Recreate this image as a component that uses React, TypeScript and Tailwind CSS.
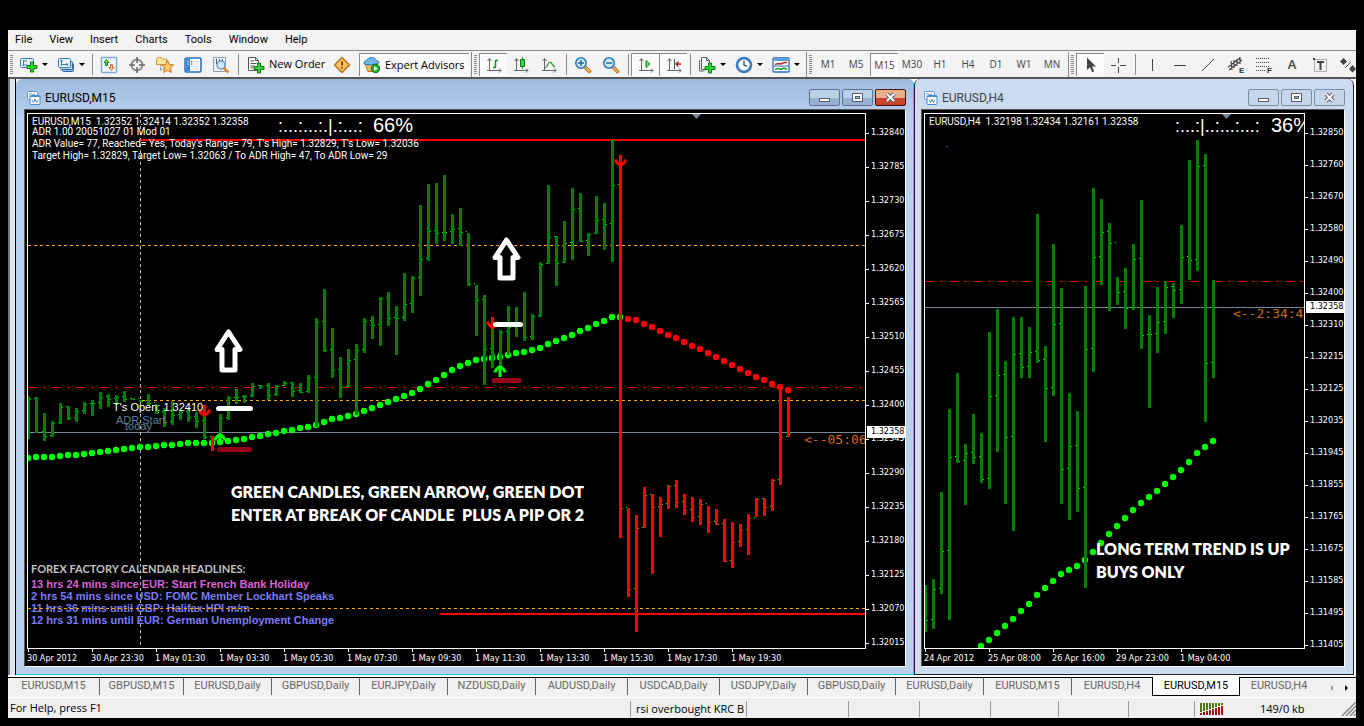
import React from 'react';
import clsx from 'clsx';

type Bar = [high: number, low: number, close: number];

const BAR_STEP = 8;

// M15 window: high / low / close, in canvas pixels
const M15_BARS: Bar[] = [
  [396, 439, 399], [397, 433, 432], [413, 441, 436], [421, 437, 423], [403, 424, 407], [406, 420, 418],
  [408, 422, 411], [402, 414, 404], [400, 416, 403], [392, 409, 397], [394, 407, 399], [395, 405, 397],
  [391, 402, 399], [398, 400, 399], [400, 402, 401], [394, 405, 403], [404, 414, 412], [408, 427, 422],
  [401, 425, 415], [410, 420, 412], [408, 422, 417], [412, 428, 421], [414, 439, 437], [436, 451, 438],
  [414, 440, 418], [396, 420, 398], [389, 404, 397], [395, 403, 396], [383, 397, 386], [385, 389, 386],
  [383, 400, 395], [385, 396, 386], [381, 386, 383], [382, 397, 391], [383, 393, 392], [375, 393, 378],
  [318, 427, 322], [289, 352, 350], [328, 378, 370], [357, 398, 387], [349, 387, 360], [344, 415, 350],
  [318, 353, 321], [316, 339, 325], [297, 346, 298], [292, 326, 318], [306, 355, 318], [273, 321, 304],
  [276, 313, 278], [205, 296, 259], [184, 261, 231], [183, 244, 233], [175, 241, 232], [214, 244, 229],
  [208, 246, 232], [233, 286, 284], [285, 336, 300], [295, 385, 349], [327, 368, 354], [330, 368, 332],
  [306, 355, 327], [307, 337, 325], [292, 341, 337], [314, 340, 316], [262, 317, 264], [185, 264, 237],
  [236, 286, 263], [221, 263, 243], [188, 260, 209], [193, 242, 241], [233, 256, 234], [196, 234, 220],
  [203, 250, 224], [140, 262, 185], [163, 538, 508], [508, 597, 589], [515, 632, 528], [487, 528, 495],
  [494, 574, 507], [497, 537, 504], [485, 509, 486], [480, 508, 502], [494, 515, 510], [497, 522, 517],
  [499, 525, 504], [506, 533, 522], [509, 525, 524], [519, 562, 561], [522, 568, 542], [524, 547, 530],
  [514, 555, 518], [498, 517, 499], [498, 516, 507], [479, 511, 480], [388, 485, 437], [397, 437, 433],
];

const M15_DOTS = [
  458, 457, 457, 457, 456, 455, 455, 454, 453, 452, 451, 450, 449, 448, 447, 447, 446, 445, 445, 444, 443, 443,
  443, 443, 442, 441, 440, 439, 437, 436, 434, 433, 431, 430, 428, 427, 425, 422, 419, 418, 416, 414, 411, 408,
  405, 402, 399, 396, 393, 389, 384, 380, 375, 370, 366, 363, 360, 359, 358, 357, 355, 353, 352, 350, 348, 344,
  341, 338, 335, 331, 328, 324, 321, 317, 317, 319, 320, 324, 327, 331, 335, 338, 342, 346, 349, 353, 357, 361,
  365, 369, 373, 377, 380, 384, 387, 390,
];

const H4_BARS: Bar[] = [
  [585, 632, 620], [579, 629, 589], [492, 594, 551], [409, 620, 457], [373, 463, 461], [444, 505, 453],
  [414, 464, 457], [433, 483, 479], [332, 489, 396], [309, 452, 375], [361, 504, 437], [317, 531, 354],
  [317, 378, 367], [327, 378, 352], [214, 363, 360], [346, 442, 388], [244, 396, 324], [288, 504, 469],
  [393, 520, 446], [411, 512, 488], [286, 588, 349], [188, 372, 257], [199, 285, 232], [223, 311, 243],
  [277, 305, 292], [268, 329, 308], [244, 310, 259], [200, 349, 335], [315, 408, 334], [287, 353, 322],
  [281, 334, 287], [283, 318, 290], [225, 304, 257], [160, 280, 260], [140, 271, 166], [154, 422, 363],
  [280, 378, 307],
];

const H4_DOTS = [
  646, 640, 633, 626, 619, 611, 604, 595, 588, 581, 574, 570, 566, 560, 552, 543, 534, 526, 518, 510, 503, 497,
  491, 484, 477, 470, 462, 453, 447, 441,
];

const M15_PRICES = [
  '1.32840', '1.32785', '1.32730', '1.32675', '1.32620', '1.32565', '1.32510', '1.32455', '1.32400', '1.32345',
  '1.32290', '1.32235', '1.32180', '1.32125', '1.32070', '1.32015',
];
const H4_PRICES = [
  '1.32850', '1.32760', '1.32670', '1.32580', '1.32490', '1.32400', '1.32310', '1.32215', '1.32125', '1.32035',
  '1.31945', '1.31855', '1.31765', '1.31675', '1.31585', '1.31495', '1.31405',
];
const M15_TIMES = [
  '30 Apr 2012', '30 Apr 23:30', '1 May 01:30', '1 May 03:30', '1 May 05:30', '1 May 07:30', '1 May 09:30',
  '1 May 11:30', '1 May 13:30', '1 May 15:30', '1 May 17:30', '1 May 19:30',
];
const H4_TIMES = ['24 Apr 2012', '25 Apr 08:00', '26 Apr 16:00', '29 Apr 23:00', '1 May 04:00'];

const MENU = ['File', 'View', 'Insert', 'Charts', 'Tools', 'Window', 'Help'];
const PERIODS = ['M1', 'M5', 'M15', 'M30', 'H1', 'H4', 'D1', 'W1', 'MN'];

const TABS: [string, string][] = [
  ['EURUSD,M15', 'w-[92px]'], ['GBPUSD,M15', 'w-[84px]'], ['EURUSD,Daily', 'w-[88px]'],
  ['GBPUSD,Daily', 'w-[88px]'], ['EURJPY,Daily', 'w-[88px]'], ['NZDUSD,Daily', 'w-[88px]'],
  ['AUDUSD,Daily', 'w-[92px]'], ['USDCAD,Daily', 'w-[92px]'], ['USDJPY,Daily', 'w-[88px]'],
  ['GBPUSD,Daily', 'w-[88px]'], ['EURUSD,Daily', 'w-[88px]'], ['EURUSD,M15', 'w-[88px]'],
  ['EURUSD,H4', 'w-[80px]'], ['EURUSD,M15', 'w-[88px]'], ['EURUSD,H4', 'w-[78px]'],
];
const ACTIVE_TAB = 13;

/* ---------- toolbar icons ---------- */

const Icon = ({ children }: { children: React.ReactNode }) => (
  <svg className="size-[18px] shrink-0" viewBox="0 0 18 18" fill="none">{children}</svg>
);

const Plus = ({ x, y }: { x: number; y: number }) => (
  <path
    transform={`translate(${x} ${y})`}
    d="M4 .5h3V4h3.500v3H7v3.500H4V7H.5V4H4z"
    fill="#2fd42f"
    stroke="#0a7d12"
  />
);

const Axes = () => (
  <path d="M4.500 3v12M2.500 5l2-2.500 2 2.500M2 14.500h14M14 12.500l2 2-2 2" stroke="#666" />
);

const NewChartIcon = () => (
  <Icon>
    <rect x=".5" y="2.500" width="13" height="9" rx="1" fill="#e6f2fb" stroke="#3c78b4" />
    <path d="M3.500 4v6M2.500 9h5M3 5h4" stroke="#3c78b4" />
    <Plus x={6.5} y={5.5} />
  </Icon>
);
const ProfilesIcon = () => (
  <Icon>
    <rect x="5.500" y="7.500" width="11" height="8" rx="1" fill="#8fbce6" stroke="#2f6aa8" />
    <rect x="3.500" y="5.500" width="12" height="8" rx="1" fill="#b7d6f1" stroke="#2f6aa8" />
    <rect x="1.500" y="2.500" width="12" height="9" rx="1" fill="#eaf4fc" stroke="#3c78b4" />
    <path d="M4.500 4v6M3 5h3M4 8.500h7M10 7v3" stroke="#3c78b4" />
  </Icon>
);
const MarketIcon = () => (
  <Icon>
    <rect x="1.500" y="1.500" width="15" height="15" rx="1" fill="#f4faff" stroke="#7fabd6" strokeWidth="1.500" />
    <path d="M6.500 3.500 4 6.500h1.500v3h2v-3H9z" fill="#5fe05f" stroke="#128a1c" />
    <path d="M11.500 14.500l2.500-3h-1.500v-3h-2v3H9z" fill="#ffd08a" stroke="#d0661a" />
  </Icon>
);
const TargetIcon = () => (
  <Icon>
    <circle cx="9" cy="9" r="5.500" stroke="#777" strokeWidth="1.500" />
    <path d="M9 1v6M9 11v6M1 9h6M11 9h6" stroke="#666" strokeWidth="1.500" />
  </Icon>
);
const NavigatorIcon = () => (
  <Icon>
    <path d="M.5 8.500v-6l1-1h4l1 1.500h4v5.500z" fill="#fbe39a" stroke="#c99a35" />
    <path d="M4.500 9.500v6M5 13h3" stroke="#666" strokeDasharray="1 1" />
    <path d="M11.500 4.500l1.900 4 4.100.5-3 2.900.8 4.600-3.800-2.200-3.800 2.200.8-4.600-3-2.900 4.100-.5z" fill="#ffc765" stroke="#c9761a" />
  </Icon>
);
const TerminalIcon = () => (
  <Icon>
    <rect x="1" y="2" width="16" height="14" rx="1.500" fill="#fff" stroke="#2a6cb4" strokeWidth="1.500" />
    <path d="M2 3h4v12H2z" fill="#3b86d2" />
    <path d="M4 5.500v.01M4 8v.01" stroke="#fff" strokeWidth="1.500" strokeLinecap="round" />
    <path d="M7 5.500h8M7 8h8M7 10.500h8M7 13h8" stroke="#c6dbef" />
    <path d="M7.500 5.500v.01M7.500 8v.01" stroke="#d22" strokeWidth="1.500" strokeLinecap="round" />
  </Icon>
);
const TesterIcon = () => (
  <Icon>
    <path d="M1.500 1.500h12v14h-12z" fill="#eef3f8" stroke="#8b9aab" />
    <path d="M4.500 3v5M7.500 3v3M10.500 3v4" stroke="#555" />
    <circle cx="9" cy="9" r="4" fill="#cfe9fa" stroke="#6a9cc4" strokeWidth="1.500" />
    <path d="M12 12l4.500 4.500" stroke="#d38a2b" strokeWidth="2.500" />
  </Icon>
);
const OrderIcon = () => (
  <Icon>
    <path d="M1.500 1.500h7l3 3v10h-10z" fill="#fff" stroke="#555" />
    <path d="M8.500 1.500v3h3M3.500 5h4M3.500 7.500h6M3.500 10h4M3.500 12h3" stroke="#555" />
    <Plus x={6.5} y={6.5} />
  </Icon>
);
const AlertIcon = () => (
  <Icon>
    <path d="M9 1.500 16.500 9 9 16.500 1.500 9z" fill="#f9c25e" stroke="#b9711c" strokeWidth="1.500" strokeLinejoin="round" />
    <path d="M9 5.500v4M9 11v1.500" stroke="#7a3c0a" strokeWidth="1.800" />
  </Icon>
);
const ExpertIcon = () => (
  <Icon>
    <path d="M2 7.500l3 8h7l3-8z" fill="#f3b760" stroke="#b9761f" />
    <path d="M1 7.500C.5 5 3 5.500 4 4c1.500-3 7-3.500 8.500-.5.5 1.500 4 1.500 3.500 3-1 2-13 3.500-15 1z" fill="#6fb7e4" stroke="#2a76ac" />
    <circle cx="12.500" cy="12.500" r="4.200" fill="#25b336" stroke="#0c6d18" />
    <path d="M11 10.200v4.600l3.800-2.300z" fill="#fff" />
  </Icon>
);
const BarChartIcon = () => (
  <Icon><Axes /><path d="M10.500 4v8M10.500 4.500h2.500M8 11.500h2.500" stroke="#128a1c" strokeWidth="1.500" /></Icon>
);
const CandleIcon = () => (
  <Icon><Axes /><path d="M10.500 1v12" stroke="#128a1c" /><path d="M8.500 3.500h4v7h-4z" fill="#3bd14a" stroke="#0a7d12" /></Icon>
);
const LineChartIcon = () => (
  <Icon><Axes /><path d="M5 12c3-1 3-6 5-6s2 4 5 5" stroke="#1b7d2a" strokeWidth="1.200" /></Icon>
);
const ZoomIcon = ({ plus }: { plus?: boolean }) => (
  <Icon>
    <path d="M11 11l5.500 5.500" stroke="#a96412" strokeWidth="3.500" />
    <path d="M11 11l5 5" stroke="#f2b64c" strokeWidth="1.800" />
    <circle cx="7" cy="7" r="5.200" fill="#cdeafa" stroke="#2a7bbd" strokeWidth="1.600" />
    <path d={plus ? 'M4 7h6M7 4v6' : 'M4 7h6'} stroke="#1f6aa5" strokeWidth="1.500" />
  </Icon>
);
const AutoScrollIcon = () => (
  <Icon><Axes /><path d="M9 4.500v7l4-3.500z" fill="#6fdc78" stroke="#128a1c" /></Icon>
);
const ShiftIcon = () => (
  <Icon><Axes /><path d="M9.500 3v10" stroke="#355" /><path d="M16 8h-5M13.500 5.500 11 8l2.500 2.500" stroke="#b02010" strokeWidth="1.400" /></Icon>
);
const IndicatorIcon = () => (
  <Icon>
    <path d="M3.500 1.500h5l3 3v9h-8z" fill="#fff" stroke="#555" />
    <path d="M8.500 1.500v3h3M1.500 4v11h5" stroke="#666" />
    <Plus x={6.5} y={6.5} />
  </Icon>
);
const ClockIcon = () => (
  <Icon>
    <circle cx="9" cy="9" r="7" fill="#f4faff" stroke="#1e62ac" strokeWidth="2.500" />
    <circle cx="9" cy="9" r="7.200" stroke="#5fa4e4" strokeWidth=".8" />
    <path d="M9 4.500V9l3 1.500" stroke="#444" strokeWidth="1.300" />
  </Icon>
);
const TemplateIcon = () => (
  <Icon>
    <rect x="1" y="2" width="16" height="14" rx="1" fill="#fff" stroke="#2a6cb4" strokeWidth="1.300" />
    <path d="M1.500 2.500h15V5h-15z" fill="#5c9fdd" />
    <path d="M3 8.500l3-1 3 .5 3-1.500h3" stroke="#c22a1a" strokeWidth="1.400" />
    <path d="M1.500 10h15" stroke="#2a6cb4" />
    <path d="M3 13.500l3-1 3 1 3-1.500 3 1.500" stroke="#1b9a2c" strokeWidth="1.400" />
  </Icon>
);
const CursorIcon = () => (
  <Icon><path d="M5 1.500v12.500l3-2.800 2.200 5 2-1L10 10.500h4z" fill="#444" /></Icon>
);
const CrossIcon = () => (
  <Icon><path d="M9.500 2v5M9.500 11v6M2 9.500h5M11 9.500h6" stroke="#444" /></Icon>
);
const VLineIcon = () => <Icon><path d="M9.500 3v12" stroke="#444" /></Icon>;
const HLineIcon = () => <Icon><path d="M3 9.500h12" stroke="#444" /></Icon>;
const TrendIcon = () => <Icon><path d="M3 15 15 3" stroke="#444" /></Icon>;
const ChannelIcon = () => (
  <Icon>
    <path d="M1 11 13 2M2 14 15 4M4 5l1 9M7 4v8M10 3v7M13 1v7" stroke="#444" strokeWidth="1.200" />
    <text x="12" y="17" className="fill-[#333] font-['Liberation_Sans'] text-[8px] font-bold">E</text>
  </Icon>
);
const FiboIcon = () => (
  <Icon>
    <path d="M1 2.500h14M1 6.500h14M1 10.500h14M1 14.500h9" stroke="#444" strokeDasharray="1 1" />
    <text x="12" y="17" className="fill-[#333] font-['Liberation_Sans'] text-[8px] font-bold">F</text>
  </Icon>
);
const LabelIcon = () => (
  <Icon>
    <rect x="3.500" y="3.500" width="12" height="12" stroke="#666" strokeDasharray="1 1" />
    <path d="M6 6h7M9.500 6v8" stroke="#444" strokeWidth="2" />
    <path d="M2 2h2v2H2z" fill="#444" />
  </Icon>
);
const ArrowsIcon = () => (
  <Icon>
    <path d="M4.500 2 8 5.500 4.500 9 1 5.500zM13.500 9l3.500 4-3.500 3.500L10 13z" fill="#444" />
    <path d="M6 12l6-6" stroke="#555" />
  </Icon>
);

const ChartDocIcon = () => (
  <svg className="size-[14px] shrink-0" viewBox="0 0 14 14" fill="none">
    <rect x=".5" y=".5" width="10" height="8" rx="1" fill="#fff" stroke="#5a96dc" />
    <path d="M2 3.500l2-1 2 1.500 2-1.500" stroke="#5a96dc" />
    <rect x="3" y="4.500" width="10" height="9" rx="1" fill="#fff" stroke="#4a88d2" />
    <path d="M3 5.500h10" stroke="#4a88d2" />
    <path d="M5 9l1.500 2.500L8 8l1.500 3.500L11 9" stroke="#4a88d2" />
  </svg>
);

/* ---------- toolbar ---------- */

const ToolButton = ({ label, pressed, children }: { label: string; pressed?: boolean; children: React.ReactNode }) => (
  <button
    aria-label={label}
    className={clsx(
      'flex h-[23px] w-7 shrink-0 items-center justify-center text-[10px] text-[#444]',
      pressed && 'border-t border-l border-[#8a8a8a] bg-[#fbfbfb]',
    )}
  >
    {children}
  </button>
);

const DropButton = ({ label, children }: { label: string; children: React.ReactNode }) => (
  <button aria-label={label} className="flex h-[23px] w-[37px] shrink-0 items-center gap-1 pl-[5px]">
    {children}
    <span className="border-x-[3px] border-t-[3px] border-x-transparent border-t-black" />
  </button>
);

const Sep = () => (
  <div className="flex w-[6px] shrink-0 justify-center">
    <span className="h-[21px] w-px bg-[#8a8a8a]" />
  </div>
);

const Grip = ({ line }: { line?: boolean }) => (
  <div className="flex shrink-0 items-center gap-[2px] px-[2px]">
    {line && <span className="h-[25px] w-px bg-[#8a8a8a]" />}
    <svg className="h-[20px] w-[3px]" viewBox="0 0 3 20">
      <path d="M1.500 0v20" stroke="#888" strokeWidth="3" strokeDasharray="1 1" />
    </svg>
  </div>
);

const Toolbar = () => (
  <div className="flex h-[27px] items-center overflow-hidden border-t border-[#8a8a8a] bg-[#f3f3f3] pt-px font-['Open_Sans',sans-serif]">
    <Grip />
    <DropButton label="New chart"><NewChartIcon /></DropButton>
    <DropButton label="Profiles"><ProfilesIcon /></DropButton>
    <Sep />
    <ToolButton label="Market watch"><MarketIcon /></ToolButton>
    <ToolButton label="Data window"><TargetIcon /></ToolButton>
    <ToolButton label="Navigator"><NavigatorIcon /></ToolButton>
    <ToolButton label="Terminal"><TerminalIcon /></ToolButton>
    <ToolButton label="Strategy tester"><TesterIcon /></ToolButton>
    <Sep />
    <button className="flex h-[23px] w-[87px] shrink-0 items-center gap-1 pl-[6px] text-[11px] whitespace-nowrap text-black">
      <OrderIcon />
      New Order
    </button>
    <ToolButton label="MetaEditor"><AlertIcon /></ToolButton>
    <button className="ml-[3px] flex h-[23px] w-[110px] shrink-0 items-center gap-1 border-t border-l border-[#8a8a8a] bg-[#fbfbfb] pl-[3px] text-[11px] whitespace-nowrap text-black">
      <ExpertIcon />
      Expert Advisors
    </button>
    <Grip line />
    <ToolButton label="Bar chart" pressed><BarChartIcon /></ToolButton>
    <ToolButton label="Candlesticks"><CandleIcon /></ToolButton>
    <ToolButton label="Line chart"><LineChartIcon /></ToolButton>
    <Sep />
    <ToolButton label="Zoom in"><ZoomIcon plus /></ToolButton>
    <ToolButton label="Zoom out"><ZoomIcon /></ToolButton>
    <Sep />
    <ToolButton label="Auto scroll" pressed><AutoScrollIcon /></ToolButton>
    <ToolButton label="Chart shift" pressed><ShiftIcon /></ToolButton>
    <Sep />
    <DropButton label="Indicators"><IndicatorIcon /></DropButton>
    <DropButton label="Periodicity"><ClockIcon /></DropButton>
    <DropButton label="Templates"><TemplateIcon /></DropButton>
    <Grip line />
    {PERIODS.map((p) => (
      <ToolButton key={p} label={p} pressed={p === 'M15'}>{p}</ToolButton>
    ))}
    <Grip line />
    <ToolButton label="Cursor" pressed><CursorIcon /></ToolButton>
    <ToolButton label="Crosshair"><CrossIcon /></ToolButton>
    <Sep />
    <ToolButton label="Vertical line"><VLineIcon /></ToolButton>
    <ToolButton label="Horizontal line"><HLineIcon /></ToolButton>
    <ToolButton label="Trendline"><TrendIcon /></ToolButton>
    <ToolButton label="Equidistant channel"><ChannelIcon /></ToolButton>
    <ToolButton label="Fibonacci retracement"><FiboIcon /></ToolButton>
    <ToolButton label="Text"><span className="text-[13px] font-semibold">A</span></ToolButton>
    <ToolButton label="Text label"><LabelIcon /></ToolButton>
    <ToolButton label="Arrows"><ArrowsIcon /></ToolButton>
  </div>
);

/* ---------- chart drawing ---------- */

const Bars = ({ bars, x0, isRed }: { bars: Bar[]; x0: number; isRed?: (i: number) => boolean }) => (
  <g shapeRendering="crispEdges">
    {bars.map(([high, low, close], i) => {
      const x = x0 + i * BAR_STEP;
      return (
        <g key={i}>
          <rect x={x - 1} y={high} width="3" height={low - high} fill={isRed?.(i) ? '#ff0000' : '#008000'} />
          <rect x={x + 2} y={close} width="1" height="1" fill="#00ff00" />
          {i < bars.length - 1 && <rect x={x + 6} y={close - 1} width="1" height="1" fill="#00ff00" />}
        </g>
      );
    })}
  </g>
);

const Dots = ({ ys, x0, isRed }: { ys: number[]; x0: number; isRed?: (i: number) => boolean }) => (
  <g>
    {ys.map((y, i) => (
      <circle key={i} cx={x0 + i * BAR_STEP} cy={y} r="3.200" fill={isRed?.(i) ? '#ff0000' : '#00ff00'} />
    ))}
  </g>
);

const Signal = ({ x, y, up }: { x: number; y: number; up?: boolean }) => (
  <path
    transform={`translate(${x} ${y})`}
    d={up ? 'M0 13V2M-5 8.500Q-4.500 5 0 2.500Q4.500 5 5 8.500' : 'M0 0v11M-5 4.500Q-4.500 8 0 10.500Q4.500 8 5 4.500'}
    fill="none"
    stroke={up ? '#00ff00' : '#ff0000'}
    strokeWidth="3"
  />
);

const BigArrow = ({ x, y }: { x: number; y: number }) => (
  <path
    transform={`translate(${x} ${y})`}
    d="M0 2 11.500 19.500H6.500V40H-6.500V19.500H-11.500Z"
    fill="#000"
    stroke="#fff"
    strokeWidth="5"
    strokeLinejoin="round"
  />
);

const M15Plot = () => (
  <svg className="absolute inset-0 size-full" aria-label="EURUSD M15 chart">
    <g transform="translate(-28 -114)">
      <g fill="none" shapeRendering="crispEdges">
        <path d="M28 387.500h838" stroke="#e00000" strokeDasharray="9 6 3 6" />
        <path d="M28 245.500h838M142 400.500h724M28 608.500h838" stroke="#ffa500" strokeDasharray="3 3" />
        <path d="M28 432.500h838" stroke="#778899" />
        <path d="M140.500 114v534" stroke="#c0c0c0" strokeDasharray="3 3" />
        <path d="M140 140h726M440 614h426" stroke="#ff0000" strokeWidth="2" />
      </g>
      <Dots ys={M15_DOTS} x0={28} isRed={(i) => i > 74} />
      <Bars bars={M15_BARS} x0={28} isRed={(i) => i > 73 || i === 23} />
      <Signal x={204.5} y={405} />
      <Signal x={492.5} y={317} />
      <Signal x={620.5} y={155} />
      <Signal x={220} y={432} up />
      <Signal x={500} y={364} up />
      <path d="M219.500 449.500h30M494 380.500h25" stroke="#94001c" strokeWidth="5" strokeLinecap="round" />
      <path d="M218.500 408.500h32M495.500 324.500h25" stroke="#fff" strokeWidth="5" strokeLinecap="round" />
      <BigArrow x={228.5} y={330} />
      <BigArrow x={506.5} y={238} />
      <path d="M692 114h9l-4.500 5z" fill="#778899" />

      <g className="fill-white font-['Roboto',sans-serif] text-[10px]">
        <text x="32" y="125" className="whitespace-pre">EURUSD,M15  1.32352 1.32414 1.32352 1.32358</text>
        <text x="32" y="135">ADR 1.00 20051027 01 Mod 01</text>
        <text x="32" y="147">ADR Value= 77, Reached= Yes, Today's Range= 79, T's High= 1.32829, T's Low= 1.32036</text>
        <text x="32" y="159">Target High= 1.32829, Target Low= 1.32063 / To ADR High= 47, To ADR Low= 29</text>
      </g>
      <g className="fill-white font-['Liberation_Sans',sans-serif]">
        <text x="278" y="132" className="text-[18px]">:...:...:.|.:...:</text>
        <text x="373" y="132" className="text-[20px]">66%</text>
        <text x="113" y="411" className="text-[11px]">T's Open: 1.32410</text>
        <text x="116" y="424" className="fill-[#5f7f9f] text-[11px]">ADR Start</text>
        <text x="125" y="430" className="fill-[#5f7f9f] text-[11px]">today</text>
      </g>
      <text x="804" y="444" className="fill-[#d2691e] font-['DejaVu_Sans_Mono',monospace] text-[13px]">{'<--05:06'}</text>
      <g className="fill-white font-['Lato',sans-serif] text-[16px] font-extrabold">
        <text x="231" y="498">GREEN CANDLES, GREEN ARROW, GREEN DOT</text>
        <text x="231" y="521" className="whitespace-pre">ENTER AT BREAK OF CANDLE  PLUS A PIP OR 2</text>
      </g>
      <g className="fill-[#7b7bf5] font-['Liberation_Sans',sans-serif] text-[11px] font-bold">
        <text x="31" y="573" className="fill-[#c0c0c0] font-['Lato',sans-serif]">FOREX FACTORY CALENDAR HEADLINES:</text>
        <text x="31" y="588" className="fill-[#da62d6]">13 hrs 24 mins since EUR: Start French Bank Holiday</text>
        <text x="31" y="600">2 hrs 54 mins since USD: FOMC Member Lockhart Speaks</text>
        <text x="31" y="612">11 hrs 36 mins until GBP: Halifax HPI m/m</text>
        <text x="31" y="624">12 hrs 31 mins until EUR: German Unemployment Change</text>
      </g>
      <path d="M28 608.500h226" stroke="#ffa500" strokeDasharray="3 3" shapeRendering="crispEdges" />
    </g>
  </svg>
);

const H4Plot = () => (
  <svg className="absolute inset-0 size-full" aria-label="EURUSD H4 chart">
    <g transform="translate(-925 -114)">
      <g fill="none" shapeRendering="crispEdges">
        <path d="M925 281.500h380" stroke="#e00000" strokeDasharray="9 6 3 6" />
        <path d="M925 307.500h380" stroke="#778899" />
      </g>
      <Dots ys={H4_DOTS} x0={981} />
      <Bars bars={H4_BARS} x0={925} />
      <path d="M1222 114h9l-4.500 5z" fill="#778899" />
      <path d="M946 146.500h2" stroke="#3a4fb0" />
      <text x="929" y="125" className="fill-white font-['Roboto',sans-serif] text-[10px] whitespace-pre">
        EURUSD,H4  1.32198 1.32434 1.32161 1.32358
      </text>
      <g className="fill-white font-['Liberation_Sans',sans-serif]">
        <text x="1175" y="132" className="text-[18px]">:...:|..:...:...:</text>
        <text x="1271" y="132" className="text-[20px]">36%</text>
      </g>
      <text x="1233" y="318" className="fill-[#d2691e] font-['DejaVu_Sans_Mono',monospace] text-[13px]">{'<--2:34:4'}</text>
      <g className="fill-white font-['Lato',sans-serif] text-[16px] font-extrabold">
        <text x="1096" y="555">LONG TERM TREND IS UP</text>
        <text x="1096" y="578">BUYS ONLY</text>
      </g>
    </g>
  </svg>
);

/* ---------- windows ---------- */

const CaptionButton = ({ kind, active }: { kind: 'min' | 'max' | 'close'; active?: boolean }) => (
  <button
    aria-label={kind}
    className={clsx(
      'flex h-[17px] w-[31px] items-center justify-center rounded-xs border',
      active && kind === 'close' && 'border-[#4a1010] bg-linear-to-b from-[#e8b08a] from-50% to-[#c8442a] to-50%',
      active && kind !== 'close' && 'border-[#5d7391] bg-linear-to-b from-[#bcd0e8] from-50% to-[#97b1d2] to-50%',
      !active && 'border-[#7c8da6] bg-[#c6d5ea]',
    )}
  >
    <svg className="h-[11px] w-[13px]" viewBox="0 0 13 11" fill="none">
      {kind === 'min' && <rect x="1.500" y="6.500" width="10" height="3" fill="#fff" stroke="#555d70" />}
      {kind === 'max' && (
        <>
          <rect x="1.500" y="1.500" width="10" height="8" fill="#fff" stroke="#555d70" />
          <rect x="4.500" y="4.500" width="4" height="2" fill="#aebfd8" stroke="#555d70" />
        </>
      )}
      {kind === 'close' && (
        <>
          <path d="M3 2l7 7M10 2 3 9" stroke="#555d70" strokeWidth="4" />
          <path d="M3 2l7 7M10 2 3 9" stroke="#fff" strokeWidth="2" />
        </>
      )}
    </svg>
  </button>
);

interface ChartWindowProps {
  title: string;
  active?: boolean;
  prices: string[];
  rowClass: string;
  times: string[];
  quoteClass: string;
  children: React.ReactNode;
}

const ChartWindow = ({ title, active, prices, rowClass, times, quoteClass, children }: ChartWindowProps) => (
  <section
    className={clsx(
      'flex min-w-0 flex-col rounded-t-md pb-[7px]',
      active
        ? 'border-r border-b border-[#22c8e8] bg-linear-to-b from-[#a0bbdf] to-[#b9d1ec] to-[40px] pr-[7px] pl-2'
        : 'border-x border-b border-[#222] bg-[#ccdcf0] pr-2 pl-[6px]',
    )}
  >
    <header className="flex h-[30px] items-center gap-1 pt-[7px] pl-[3px]">
      <ChartDocIcon />
      <h2 className={clsx("flex-1 font-['Roboto',sans-serif] text-[12px]", active ? 'text-black' : 'text-[#3c4450]')}>
        {title}
      </h2>
      <div className="flex gap-[2px]">
        <CaptionButton kind="min" active={active} />
        <CaptionButton kind="max" active={active} />
        <CaptionButton kind="close" active={active} />
      </div>
    </header>
    <div className="grid flex-1 grid-cols-[1fr_39px] grid-rows-[1fr_17px] border border-t-[#555] border-r-white border-b-white border-l-[#555] bg-black pt-[3px] pl-[2px] font-['DejaVu_Sans_Condensed','Open_Sans',sans-serif] text-[9px] text-white">
      <div className="relative overflow-hidden border border-white">{children}</div>
      <div className="relative flex flex-col pt-[14px]">
        {prices.map((p) => (
          <div key={p} className={clsx('last-of-type:h-2', rowClass)}>
            <div className="flex h-3 items-center gap-[2px]">
              <span className="h-px w-[3px] bg-white" />
              {p}
            </div>
          </div>
        ))}
        <span className={clsx('absolute right-0 left-px flex h-3 items-center bg-white pl-1 text-black', quoteClass)}>
          1.32358
        </span>
      </div>
      <div className="col-span-2 flex overflow-hidden">
        {times.map((t) => (
          <div key={t} className="w-16 shrink-0 whitespace-nowrap">
            <span className="ml-px block h-[3px] w-px bg-white" />
            <span className="block leading-[12px]">{t}</span>
          </div>
        ))}
      </div>
    </div>
  </section>
);

const TabStrip = () => (
  <nav className="flex h-5 border-t border-black bg-[#f1f1f1] font-['Roboto',sans-serif] text-[11px] text-[#666]">
    {TABS.map(([name, width], i) => (
      <button
        key={i}
        className={clsx(
          'flex shrink-0 items-center justify-center whitespace-nowrap',
          width,
          i === ACTIVE_TAB && '-mt-px h-[19px] border-x border-b border-black bg-white text-black',
          i !== ACTIVE_TAB && 'h-[17px]',
          i < 12 && 'border-r border-[#666]',
        )}
      >
        {name}
      </button>
    ))}
    <div className="flex flex-1 items-center justify-end gap-3 pr-2">
      <span className="border-y-[3px] border-r-[3px] border-y-transparent border-r-[#999]" />
      <span className="border-y-[3px] border-l-[3px] border-y-transparent border-l-black" />
    </div>
  </nav>
);

const StatusBar = () => (
  <footer className="flex h-[21px] items-center border-t border-white bg-[#efefef] pt-px font-['Open_Sans',sans-serif] text-[11px] text-black">
    <span className="flex-1 pl-[2px]">For Help, press F1</span>
    <span className="h-4 w-[116px] overflow-hidden border-l border-[#999] pl-[5px] leading-4 whitespace-nowrap">
      rsi overbought KRC B
    </span>
    <span className="h-4 w-[102px] border-l border-[#999]" />
    <span className="h-4 w-[71px] border-l border-[#999]" />
    <span className="h-4 w-[71px] border-l border-[#999]" />
    <span className="h-4 w-[68px] border-l border-[#999]" />
    <span className="h-4 w-[70px] border-l border-[#999]" />
    <span className="h-4 w-[66px] border-l border-[#999]" />
    <span className="flex h-4 w-[162px] items-center border-l border-[#999] pl-[5px] leading-4">
      <svg className="mr-9 h-3 w-6" viewBox="0 0 24 12" shapeRendering="crispEdges">
        {[0, 1, 2, 3, 4, 5, 6, 7].map((i) => (
          <g key={i}>
            <rect x={i * 3} y="0" width="2" height={9 - i} fill="#4c7a10" />
            <rect x={i * 3} y={10 - i} width="2" height={2 + i} fill="#9a1510" />
          </g>
        ))}
      </svg>
      <span className="flex-1">149/0 kb</span>
      <svg className="h-[14px] w-[14px]" viewBox="0 0 14 14">
        <path d="M0 14 14 0M4 14 14 4M8 14l6-6M12 14l2-2" stroke="#888" strokeWidth="1.500" />
      </svg>
    </span>
  </footer>
);

export default function App() {
  return (
    <div className="min-h-screen bg-black px-2 pt-[30px] pb-2">
      <div className="flex min-h-[calc(100vh-38px)] flex-col bg-[#f3f3f3]">
        <nav className="flex h-5 items-center gap-[17px] pl-[7px] font-['Roboto',sans-serif] text-[11px] text-black">
          {MENU.map((m) => (
            <button key={m}>{m}</button>
          ))}
        </nav>
        <Toolbar />
        <main className="grid flex-1 grid-cols-[8px_898fr_440fr_2px] border-t-2 border-[#555] bg-white pb-[2px]">
          <div className="border-r border-l-2 border-r-black border-l-[#777] bg-[#dfe6f3]" />
          <ChartWindow
            title="EURUSD,M15"
            active
            prices={M15_PRICES}
            rowClass="h-[34px]"
            times={M15_TIMES}
            quoteClass="top-[313px]"
          >
            <M15Plot />
          </ChartWindow>
          <ChartWindow
            title="EURUSD,H4"
            prices={H4_PRICES}
            rowClass="h-8"
            times={H4_TIMES}
            quoteClass="top-[188px]"
          >
            <H4Plot />
          </ChartWindow>
        </main>
        <TabStrip />
        <StatusBar />
      </div>
    </div>
  );
}
